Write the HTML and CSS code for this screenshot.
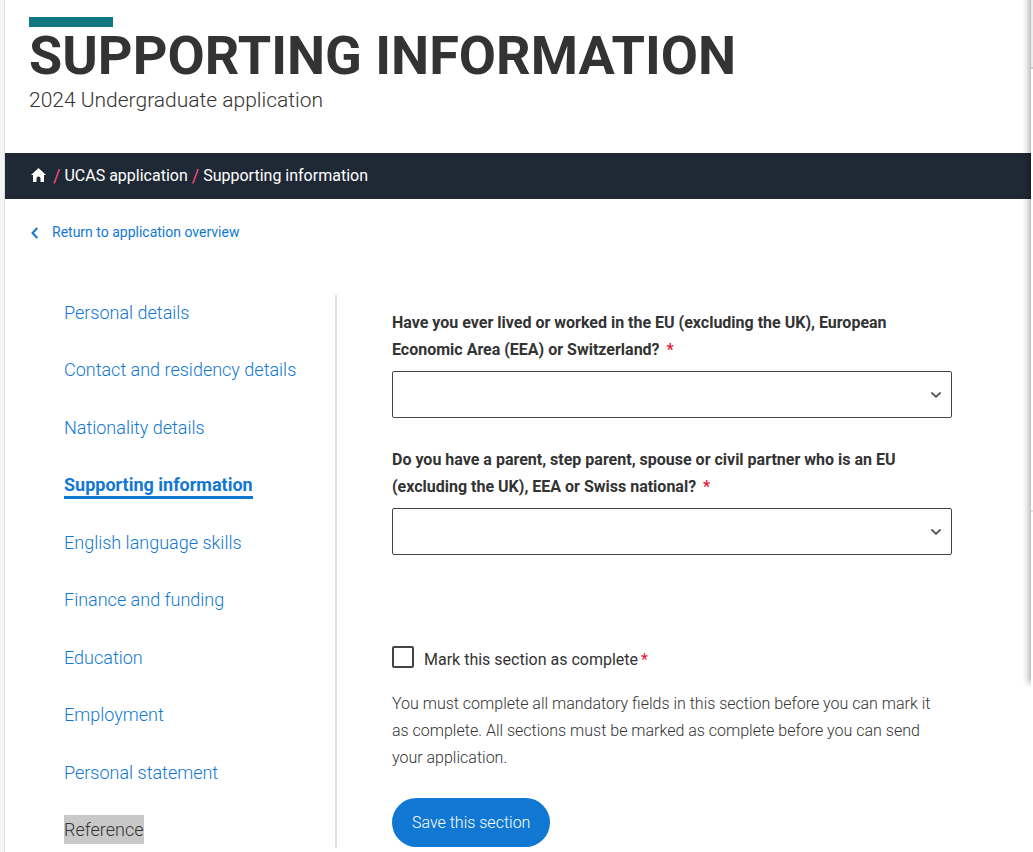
FILE: index.html
```html
<!DOCTYPE html>
<html lang="en">
<head>
<meta charset="utf-8">
<meta name="viewport" content="width=device-width, initial-scale=1">
<title>Supporting information</title>
<link rel="stylesheet" href="styles.css">
</head>
<body>
<div class="page">
  <header class="page-header">
    <h1 class="title">Supporting information</h1>
    <p class="subtitle">2024 Undergraduate application</p>
  </header>
  <nav class="breadcrumb" aria-label="Breadcrumb">
    <a class="home" href="#" aria-label="Home"><svg width="15" height="14" viewBox="0 0 15 14"><path fill="currentColor" d="M7.500 0 15 7H13V14H9.500V10.500Q9.500 8.500 7.500 8.500T5.500 10.500V14H2V7H0Z"/></svg></a>
    <span class="slash">/</span>
    <a href="#">UCAS application</a>
    <span class="slash">/</span>
    <span>Supporting information</span>
  </nav>
  <a class="back" href="#"><svg width="7" height="12" viewBox="0 0 7 12"><path fill="none" stroke="currentColor" stroke-width="2" d="M6.300 1 1.500 6l4.800 5"/></svg>Return to application overview</a>
  <div class="layout">
    <nav class="sections" aria-label="Sections">
      <a href="#">Personal details</a>
      <a href="#">Contact and residency details</a>
      <a href="#">Nationality details</a>
      <a class="current" href="#" aria-current="page">Supporting information</a>
      <a href="#">English language skills</a>
      <a href="#">Finance and funding</a>
      <a href="#">Education</a>
      <a href="#">Employment</a>
      <a href="#">Personal statement</a>
      <a class="selected" href="#">Reference</a>
    </nav>
    <form class="form">
      <div class="field">
        <label for="lived">Have you ever lived or worked in the EU (excluding the UK), European Economic Area (EEA) or Switzerland? <span class="required">*</span></label>
        <div class="select-wrap">
          <select id="lived"><option></option><option>Yes</option><option>No</option></select>
          <svg class="chevron" width="10" height="6" viewBox="0 0 10 6"><path d="M.5.5 5 4.800 9.500.5"/></svg>
        </div>
      </div>
      <div class="field">
        <label for="family">Do you have a parent, step parent, spouse or civil partner who is an EU (excluding the UK), EEA or Swiss national? <span class="required">*</span></label>
        <div class="select-wrap">
          <select id="family"><option></option><option>Yes</option><option>No</option></select>
          <svg class="chevron" width="10" height="6" viewBox="0 0 10 6"><path d="M.5.5 5 4.800 9.500.5"/></svg>
        </div>
      </div>
      <div class="complete">
        <input type="checkbox" id="complete">
        <label for="complete">Mark this section as complete<span class="required">*</span></label>
      </div>
      <p class="hint">You must complete all mandatory fields in this section before you can mark it as complete. All sections must be marked as complete before you can send your application.</p>
      <button class="save" type="button">Save this section</button>
    </form>
  </div>
</div>
<div class="edge-shadow"></div>
<div class="edge-panel"></div>
</body>
</html>
```
FILE: styles.css
```css
* { box-sizing: border-box; }

body {
  margin: 0;
  min-height: 100vh;
  padding: 0 2px 0 4px;
  position: relative;
  overflow-x: hidden;
  background: #f5f5f5;
  color: #333;
  font: 300 16px/27px Roboto, "Open Sans", sans-serif;
}

a { color: #1078d2; text-decoration: none; }

.page {
  min-height: 100vh;
  border-left: 1px solid #dedede;
  background: #fff;
}

.page-header { padding: 17px 24px 38px; }

.page-header::before {
  content: "";
  display: block;
  width: 84px;
  height: 10px;
  background: #117780;
}

.title {
  margin: 0;
  font-size: 54px;
  font-weight: 700;
  line-height: 58px;
  text-transform: uppercase;
}

.subtitle {
  margin: 0;
  font-size: 21px;
  line-height: 30px;
}

.breadcrumb {
  display: flex;
  align-items: center;
  gap: 4px;
  height: 46px;
  padding: 0 26px 2px;
  background: #1f2935;
  color: #fff;
  font-weight: 400;
}

.breadcrumb a { color: #fff; }
.breadcrumb .home { display: flex; margin-right: 3px; }
.breadcrumb .slash { color: #fb4f78; font-size: 18px; }

.back {
  display: flex;
  align-items: center;
  gap: 14px;
  width: fit-content;
  padding: 20px 26px 0;
  font-size: 14px;
  font-weight: 400;
}

.layout {
  display: grid;
  grid-template-columns: 273px minmax(0, 1fr);
  margin: 49px 79px 0 59px;
}

.sections {
  display: flex;
  flex-direction: column;
  align-items: flex-start;
  justify-content: space-between;
  padding: 3px 0 4px;
  border-right: 2px solid #e2e2e2;
  font-size: 18px;
  line-height: 29px;
}

.sections .current {
  box-shadow: inset 0 -3px #1078d2;
  font-weight: 700;
}

.sections .selected { background: #c8c8c8; color: #333; }

.form { padding: 14px 0 1px 55px; }

.field { margin-bottom: 28px; }

.field label {
  display: block;
  margin-bottom: 8px;
  font-weight: 700;
}

.required { color: #e8173a; }
.field .required { margin-left: 3px; }
.complete .required { margin-left: 3px; }

.select-wrap { position: relative; }

.select-wrap select {
  display: block;
  width: 100%;
  height: 47px;
  padding: 0 32px 0 12px;
  appearance: none;
  border: 1px solid #444;
  border-radius: 2px;
  background: #fff;
  color: #333;
  font: inherit;
}

.chevron {
  position: absolute;
  top: 21px;
  right: 11px;
  fill: none;
  stroke: #444;
  stroke-width: 1.6;
  pointer-events: none;
}

.complete {
  display: flex;
  align-items: flex-start;
  gap: 10px;
  margin: 91px 0 17px;
  font-weight: 400;
}

.complete input {
  width: 22px;
  height: 22px;
  margin: 0;
  appearance: none;
  border: 2px solid #444;
  border-radius: 2px;
  background: #fff;
}

.hint {
  margin: 0 0 27px;
  padding-right: 16px;
}

.save {
  display: block;
  height: 49px;
  padding: 0 20px;
  border: 0;
  border-radius: 25px;
  background: #1078d2;
  color: #fff;
  font: inherit;
}

.edge-shadow {
  position: absolute;
  top: 0;
  right: 2px;
  width: 9px;
  height: 688px;
  border-bottom-left-radius: 8px;
  background: linear-gradient(to right, rgba(0, 0, 0, 0), rgba(0, 0, 0, 0.08) 50%, rgba(0, 0, 0, 0.25));
  mask-image: linear-gradient(#000 678px, transparent);
}

.edge-panel {
  position: absolute;
  top: 0;
  right: 0;
  width: 2px;
  height: 100%;
  background: linear-gradient(#ededed 0 67px, #ccc 67px 69px, #fff 69px 510px, #e6e6e6 510px 512px, #fff 512px);
}
```
